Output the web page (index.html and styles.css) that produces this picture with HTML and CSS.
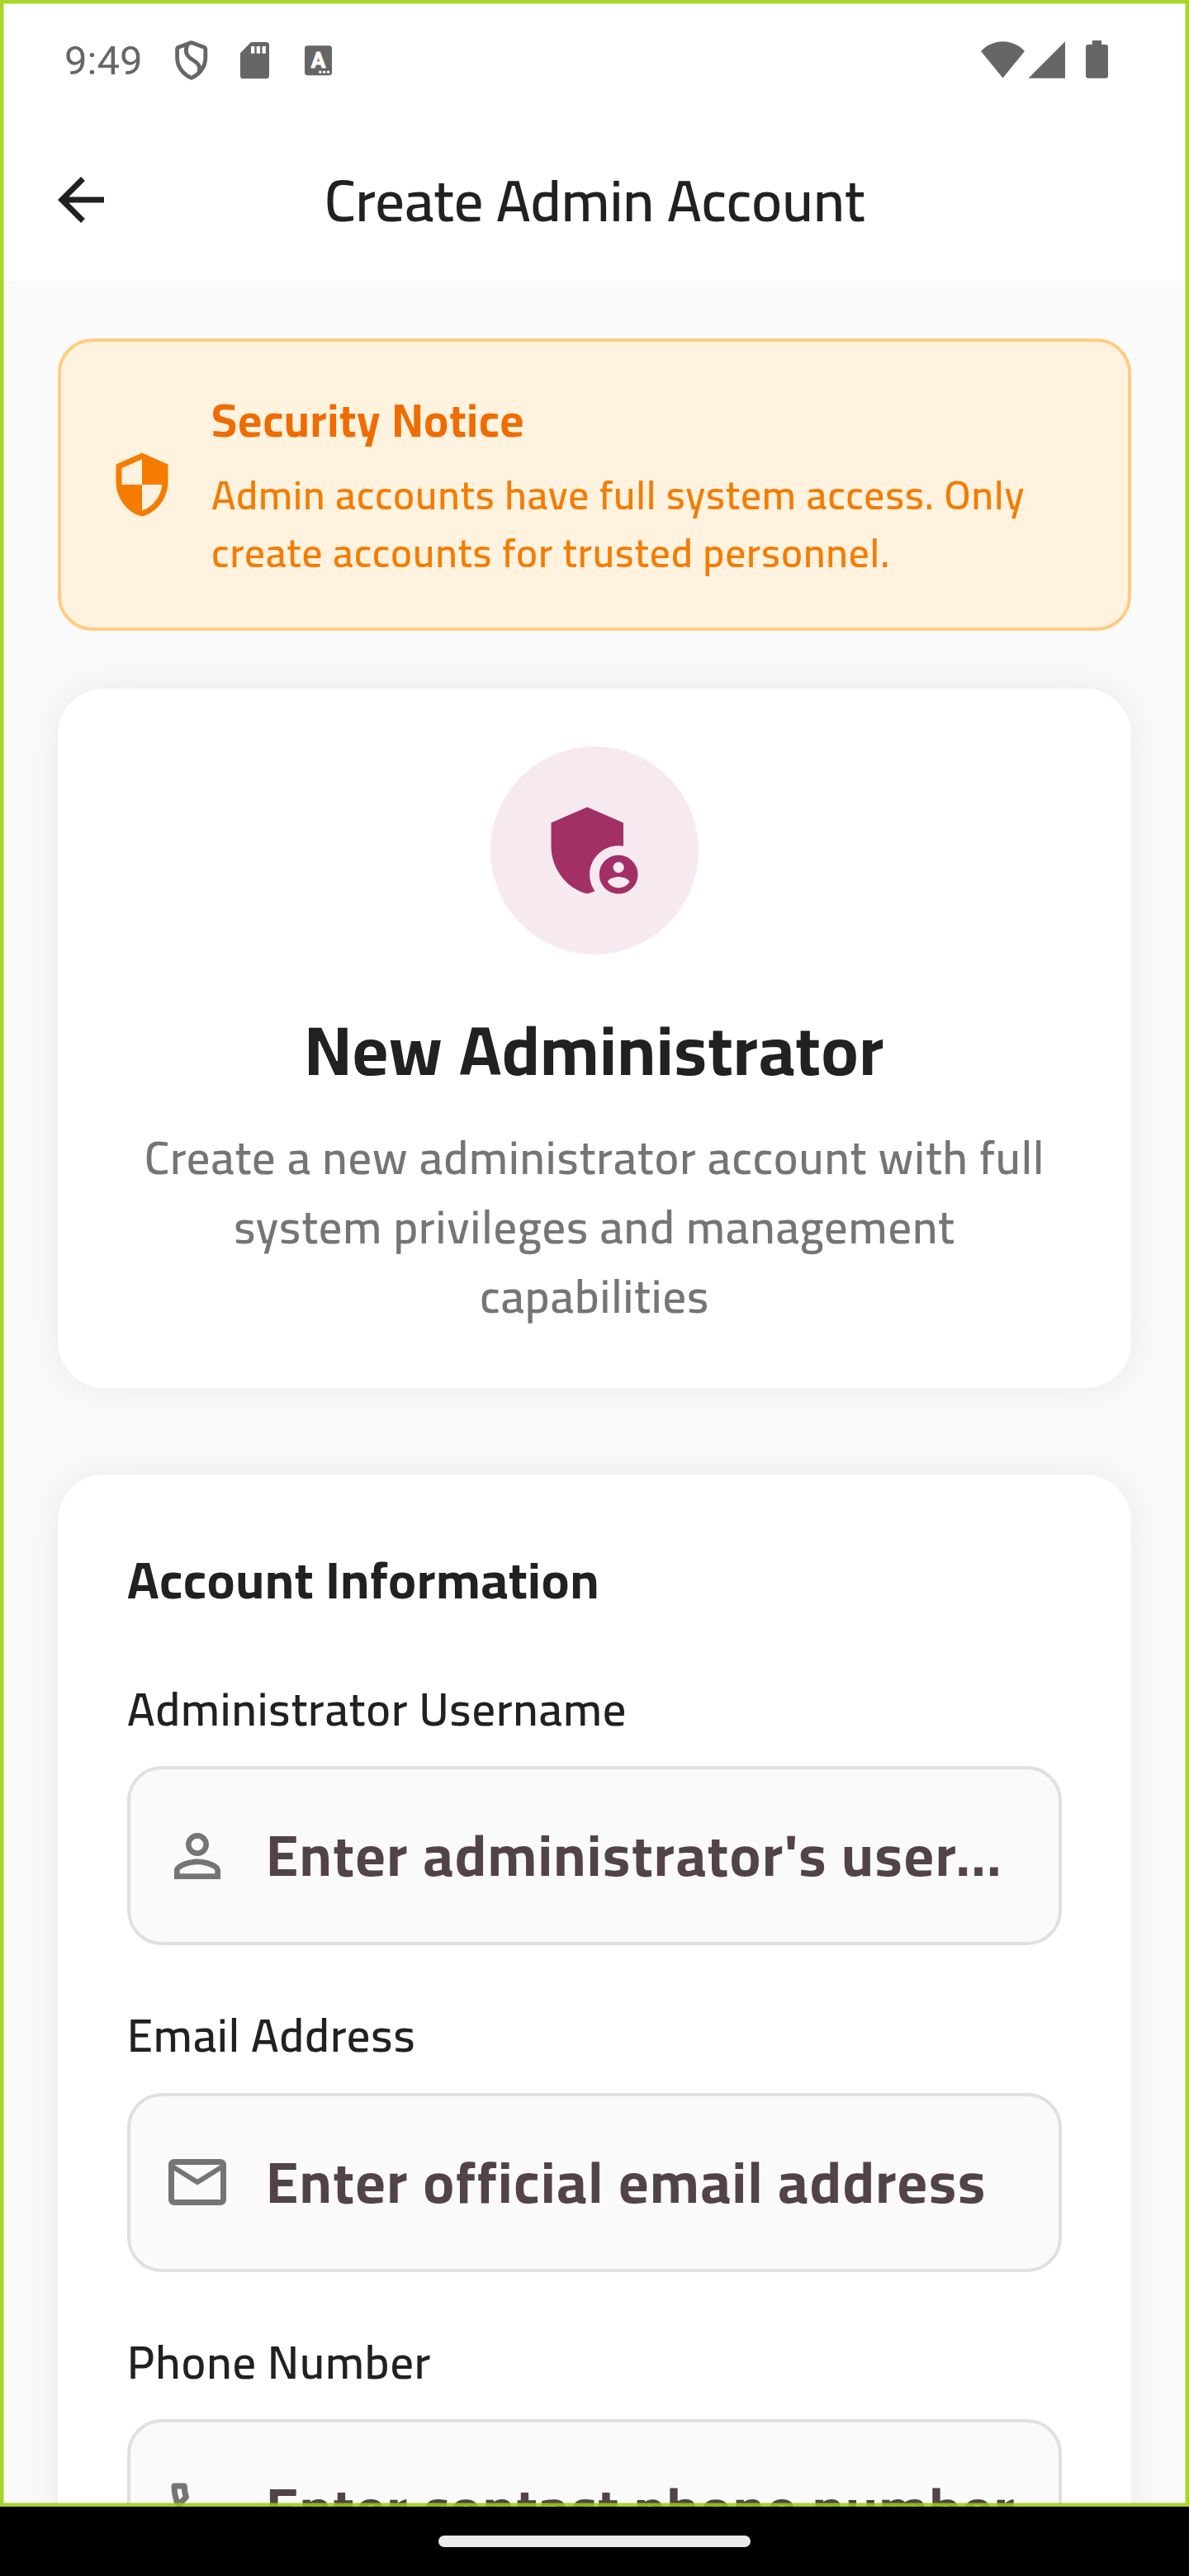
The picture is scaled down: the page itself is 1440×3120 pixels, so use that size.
FILE: index.html
```html
<!DOCTYPE html>
<html lang="en">
<head>
<meta charset="utf-8">
<title>Create Admin Account</title>
<link rel="stylesheet" href="styles.css">
</head>
<body>
<div class="screen">
  <div class="status-bar">
    <span class="clock">9:49</span>
    <svg class="st-shield" width="41" height="56" viewBox="211 46 41 56" fill="none" stroke="#666" stroke-width="4.8" stroke-linejoin="round"><path d="M231.7 51.6L247.2 57.2Q248.8 57.8 248.8 59.5V70C248.8 81.5 241 90.5 231.7 94.4C222.4 90.5 214.6 81.5 214.6 70V59.5Q214.6 57.8 216.2 57.2Z"/><path d="M227.6 53.5C223.5 61 224.6 67 232.5 72C240 76.5 243.5 80.5 240.8 87"/></svg>
    <svg class="st-sd" width="37" height="56" viewBox="290 46 37 56"><path fill="#666" d="M304 51H322.5a3.5 3.5 0 0 1 3.5 3.5V91.700a3.500 3.500 0 0 1-3.500 3.500H294.500a3.500 3.500 0 0 1-3.500-3.500V64.200Z"/><path fill="#fff" d="M304 56h4.300v8.700H304zM310.700 56h4.300v8.700h-4.300zM317.500 56h4.300v8.700h-4.300z"/></svg>
    <svg class="st-lang" width="35" height="56" viewBox="368 46 35 56"><rect x="369" y="55.200" width="33" height="36" rx="3.500" fill="#666"/><text class="st-letter" x="385.400" y="81.500" text-anchor="middle">A</text><g fill="#fff"><circle cx="387.800" cy="87.300" r="1.700"/><circle cx="392.700" cy="87.300" r="1.700"/><circle cx="397.600" cy="87.300" r="1.700"/></g></svg>
    <span class="spacer"></span>
    <svg width="55" height="56" viewBox="1187 46 55 56" fill="#666"><path d="M1214.500 94.500L1188 62C1203 46.400 1226 46.400 1241 62Z"/></svg>
    <svg class="st-signal" width="46" height="56" viewBox="1245 46 46 56" fill="#666"><path d="M1245.500 94.700H1290V50.300Z"/></svg>
    <svg class="st-battery" width="29" height="56" viewBox="1314 46 29 56" fill="#666"><path d="M1322.700 49h11.300v5h5a3 3 0 0 1 3 3v34.700a3 3 0 0 1-3 3h-21a3 3 0 0 1-3-3V57a3 3 0 0 1 3-3h4.700z"/></svg>
  </div>

  <header class="app-bar">
    <svg class="icon" viewBox="0 0 24 24"><path d="M20 11H7.830l5.590-5.590L12 4l-8 8 8 8 1.410-1.410L7.830 13H20v-2z"/></svg>
    <h1 class="app-title">Create Admin Account</h1>
  </header>

  <main class="content">
    <section class="notice">
      <svg class="icon" viewBox="0 0 24 24"><path d="M12 1L3 5v6c0 5.550 3.840 10.740 9 12 5.160-1.260 9-6.450 9-12V5l-9-4zm0 10.990h7c-.53 4.120-3.280 7.790-7 8.940V12H5V6.300l7-3.110v8.800z"/></svg>
      <div class="notice-body">
        <h2 class="notice-title">Security Notice</h2>
        <p class="notice-text">Admin accounts have full system access. Only<br>create accounts for trusted personnel.</p>
      </div>
    </section>

    <section class="card intro">
      <div class="badge">
        <svg viewBox="0 0 24 24"><path d="M17,11c0.34,0,0.67,0.04,1,0.090V6.270L10.500,3L3,6.270v4.910c0,4.540,3.200,8.790,7.500,9.820c0.550-0.130,1.080-0.320,1.600-0.550C11.410,19.470,11,18.280,11,17C11,13.690,13.690,11,17,11z"/><path fill-rule="evenodd" d="M17,13c-2.210,0-4,1.790-4,4c0,2.210,1.790,4,4,4s4-1.790,4-4C21,14.790,19.210,13,17,13z M17,14.380c0.620,0,1.120,0.510,1.120,1.120s-0.510,1.120-1.120,1.120s-1.120-0.510-1.120-1.120S16.380,14.380,17,14.380z M17,19.750c-0.930,0-1.740-0.460-2.240-1.170c0.050-0.720,1.510-1.080,2.240-1.080s2.190,0.360,2.240,1.080C18.740,19.290,17.930,19.750,17,19.750z"/></svg>
      </div>
      <h2 class="intro-title">New Administrator</h2>
      <p class="intro-text">Create a new administrator account with full<br>system privileges and management<br>capabilities</p>
    </section>

    <section class="card form">
      <h3 class="form-title">Account Information</h3>
      <div class="group">
        <span class="label">Administrator Username</span>
        <div class="field">
          <svg class="icon" viewBox="0 0 24 24"><path d="M12 5.900c1.160 0 2.100.94 2.100 2.100s-.94 2.100-2.100 2.100S9.900 9.160 9.900 8s.94-2.100 2.100-2.100m0 9c2.970 0 6.100 1.460 6.100 2.100v1.100H5.900V17c0-.64 3.130-2.100 6.100-2.100M12 4C9.790 4 8 5.790 8 8s1.790 4 4 4 4-1.790 4-4-1.790-4-4-4zm0 9c-2.670 0-8 1.340-8 4v3h16v-3c0-2.660-5.330-4-8-4z"/></svg>
          <span class="hint">Enter administrator's user...</span>
        </div>
      </div>
      <div class="group">
        <span class="label">Email Address</span>
        <div class="field">
          <svg class="icon" viewBox="0 0 24 24"><path d="M22 6c0-1.100-.9-2-2-2H4c-1.100 0-2 .9-2 2v12c0 1.100.9 2 2 2h16c1.100 0 2-.9 2-2V6zm-2 0l-8 5-8-5h16zm0 12H4V8l8 5 8-5v10z"/></svg>
          <span class="hint">Enter official email address</span>
        </div>
      </div>
      <div class="group">
        <span class="label">Phone Number</span>
        <div class="field">
          <svg class="icon" viewBox="0 0 24 24"><path d="M6.540 5c.06.89.21 1.760.45 2.590l-1.200 1.200c-.41-1.200-.67-2.470-.76-3.790h1.510m9.860 12.020c.85.24 1.720.39 2.600.45v1.490c-1.320-.09-2.590-.35-3.800-.75l1.200-1.190M7.500 3H4c-.55 0-1 .45-1 1 0 9.390 7.610 17 17 17 .55 0 1-.45 1-1v-3.490c0-.55-.45-1-1-1-1.240 0-2.450-.2-3.570-.57a.84.84 0 0 0-.31-.05c-.26 0-.51.1-.71.29l-2.200 2.200a15.150 15.150 0 0 1-6.590-6.590l2.200-2.200c.28-.28.36-.67.25-1.020A11.360 11.360 0 0 1 8.500 4c0-.55-.45-1-1-1z"/></svg>
          <span class="hint">Enter contact phone number</span>
        </div>
      </div>
    </section>
  </main>
  <div class="frame"></div>
</div>
<div class="nav-bar"><span class="pill"></span></div>
</body>
</html>
```
FILE: styles.css
```css
* { box-sizing: border-box; margin: 0; padding: 0; }

body {
  width: 1440px;
  height: 3120px;
  overflow: hidden;
  background: #000;
  color: #212121;
  font-family: "Cairo", "Roboto", sans-serif;
}

.screen {
  position: relative;
  height: 3036px;
  overflow: hidden;
  background: #fafafa;
}

/* Outline drawn over the whole screen */
.frame {
  position: absolute;
  inset: 0;
  border: 4px solid rgba(153, 206, 4, .85);
  box-shadow: inset 0 0 0 1px rgba(153, 206, 4, .4);
}

.icon { width: 84px; height: 84px; flex: none; fill: currentColor; }

/* Status bar */
.status-bar {
  display: flex;
  align-items: center;
  height: 144px;
  padding: 4px 97px 0 78px;
  background: #fff;
}
.clock { width: 133px; font: 400 49px/1.2 "Roboto", sans-serif; color: #666; }
.st-sd { margin-left: 38px; }
.st-lang { margin-left: 41px; }
.st-letter { font: 700 26px "Roboto", sans-serif; fill: #fff; stroke: #fff; stroke-width: 1; stroke-linejoin: round; }
.st-signal { margin-left: 3px; }
.st-battery { margin-left: 23px; }
.spacer { flex: 1; }

/* App bar */
.app-bar {
  display: flex;
  align-items: center;
  height: 196px;
  padding: 0 56px;
  background: #fff;
}
.app-title {
  flex: 1;
  padding: 2px 84px 0 0;
  text-align: center;
  font-size: 70px;
  font-weight: 600;
  line-height: 98px;
}

.content { padding: 70px; }

/* Security notice */
.notice {
  display: flex;
  align-items: center;
  gap: 42px;
  height: 354px;
  padding: 56px;
  border: 4px solid #ffcc80;
  border-radius: 42px;
  background: #fff3e0;
  color: #f57c00;
}
.notice-title {
  margin-bottom: 17.5px;
  font-size: 56px;
  font-weight: 700;
  line-height: 77px;
  letter-spacing: .875px;
  color: #ef6c00;
}
.notice-text { font-size: 49px; font-weight: 600; line-height: 70px; letter-spacing: .875px; white-space: nowrap; }

/* Cards */
.card {
  border-radius: 56px;
  background: #fff;
  box-shadow: 0 0 48px rgba(0, 0, 0, .072);
}
.intro {
  display: flex;
  flex-direction: column;
  align-items: center;
  height: 847px;
  margin-top: 69.5px;
  padding-top: 70px;
  text-align: center;
}
.badge {
  display: flex;
  align-items: center;
  justify-content: center;
  width: 252px;
  height: 252px;
  border-radius: 50%;
  background: #f6eaf0;
}
.badge svg { width: 140px; height: 140px; fill: #a23066; }
.intro-title {
  margin: 60.5px 0 31.5px;
  font-size: 84px;
  font-weight: 700;
  line-height: 112px;
  letter-spacing: .875px;
}
.intro-text { font-size: 56px; font-weight: 600; line-height: 84px; letter-spacing: .92px; color: #757575; }

/* Form */
.form { margin-top: 105px; padding: 84px; }
.form-title {
  margin-bottom: 73.5px;
  font-size: 63px;
  font-weight: 700;
  line-height: 86.5px;
  letter-spacing: .875px;
}
.group { margin-bottom: 69px; }
.label { display: block; margin-bottom: 29.5px; font-size: 56px; font-weight: 600; line-height: 80px; letter-spacing: .9px; }
.field {
  display: flex;
  align-items: center;
  gap: 42px;
  height: 217px;
  padding: 0 38.5px;
  border: 4px solid #e0e0e0;
  border-radius: 42px;
  background: #fafafa;
  color: #757575;
}
.hint { padding-bottom: 1px; font-size: 70px; font-weight: 700; line-height: 98px; letter-spacing: 1.8px; color: #514347; white-space: nowrap; }

/* Gesture navigation */
.nav-bar { display: flex; justify-content: center; height: 84px; padding-top: 35px; background: #000; }
.pill { width: 378px; height: 14px; border-radius: 7px; background: #ebebeb; }
```
